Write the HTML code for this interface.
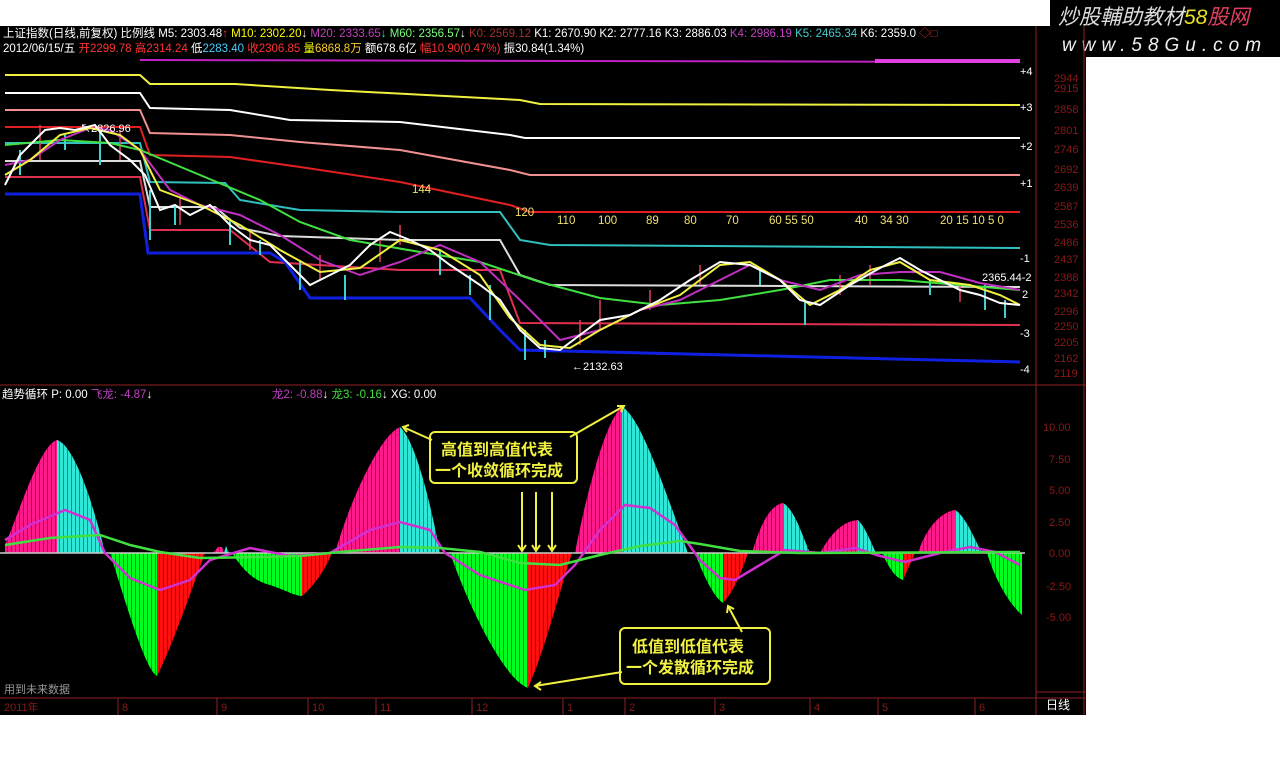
<!DOCTYPE html>
<html><head><meta charset="utf-8"><style>
html,body{margin:0;padding:0;background:#fff;width:1280px;height:771px;overflow:hidden}
svg{display:block}
text{font-family:"Liberation Sans","Noto Sans CJK SC",sans-serif}
</style></head><body>
<svg width="1280" height="771" viewBox="0 0 1280 771" xmlns="http://www.w3.org/2000/svg">
<defs>
<pattern id="st" width="4" height="10" patternUnits="userSpaceOnUse"><rect x="3" y="0" width="1" height="10" fill="#000"/></pattern>
</defs>
<rect x="0" y="0" width="1280" height="771" fill="#fff"/>
<rect x="0" y="26" width="1086" height="689" fill="#000"/>
<!-- logo -->
<rect x="1050" y="0" width="230" height="57" fill="#000"/>
<text x="1058" y="24" font-size="21" font-style="italic" fill="#ddd" font-family="'Noto Sans CJK SC',sans-serif">炒股輔助教材<tspan fill="#e8e020">58</tspan><tspan fill="#e04060">股网</tspan></text>
<text x="1062" y="51" font-size="19" font-style="italic" fill="#eee" letter-spacing="6" font-family="'Liberation Mono',monospace">www.58Gu.com</text>
<!-- frame lines -->
<line x1="1036" y1="26" x2="1036" y2="715" stroke="#902020" stroke-width="1"/>
<line x1="1084" y1="26" x2="1084" y2="715" stroke="#902020" stroke-width="1"/>
<line x1="0" y1="385" x2="1086" y2="385" stroke="#902020"/>
<line x1="0" y1="698" x2="1086" y2="698" stroke="#902020"/>
<line x1="1036" y1="692" x2="1086" y2="692" stroke="#902020"/>
<!-- header -->
<g font-size="11.5">
<text x="3" y="37"><tspan fill="#fff">上证指数(日线,前复权) 比例线  M5: 2303.48</tspan><tspan fill="#f33">↑</tspan><tspan fill="#ff0">  M10: 2302.20</tspan><tspan fill="#fff">↓</tspan><tspan fill="#c040c0">  M20: 2333.65</tspan><tspan fill="#0f8">↓</tspan><tspan fill="#7f7">  M60: 2356.57</tspan><tspan fill="#fff">↓</tspan><tspan fill="#a03030">  K0: 2569.12</tspan><tspan fill="#fff"> K1: 2670.90  K2: 2777.16  K3: 2886.03 </tspan><tspan fill="#c040c0"> K4: 2986.19 </tspan><tspan fill="#4cc"> K5: 2465.34 </tspan><tspan fill="#fff"> K6: 2359.0</tspan><tspan fill="#c03030">  ◇□</tspan></text>
<text x="3" y="52"><tspan fill="#fff">2012/06/15/五 </tspan><tspan fill="#f33">开2299.78 高2314.24 </tspan><tspan fill="#fff">低</tspan><tspan fill="#4cf">2283.40 </tspan><tspan fill="#f33">收2306.85 </tspan><tspan fill="#ff0">量</tspan><tspan fill="#fc3">6868.8万 </tspan><tspan fill="#fff">额678.6亿 </tspan><tspan fill="#f33">幅10.90(0.47%) </tspan><tspan fill="#fff">振30.84(1.34%)</tspan></text>
</g>
<!-- level lines -->
<g fill="none" stroke-width="2">
<polyline stroke="#c020c0" points="140,60 1020,62"/>
<rect x="875" y="59" width="145" height="4" fill="#e040e0" stroke="none"/>
<polyline stroke="#f0f040" points="5,75 140,75 150,84 235,84 330,90 520,100 540,104 1020,105"/>
<polyline stroke="#fff" points="5,93 140,93 150,108 230,110 290,120 400,122 510,135 525,138 1020,138"/>
<polyline stroke="#f09090" points="5,110 140,110 150,133 230,135 300,142 400,150 510,170 530,175 1020,175"/>
<polyline stroke="#e02020" points="5,127 140,127 150,155 230,157 300,167 400,182 510,205 530,212 1020,212"/>
<polyline stroke="#30c0c0" points="5,143 115,143 140,143 150,182 225,183 240,200 300,210 400,212 500,212 520,240 550,245 1020,248"/>
<polyline stroke="#ddd" points="5,161 140,161 150,207 215,207 240,228 280,236 400,240 500,240 520,275 550,285 1020,287"/>
<polyline stroke="#e03050" points="5,177 140,177 150,230 230,230 270,262 400,270 500,270 520,323 1020,325"/>
<polyline stroke="#1020e0" stroke-width="3" points="5,194 140,194 148,253 270,253 285,262 310,298 470,298 500,330 520,350 1020,362"/>
</g>
<!-- candle noise -->
<g stroke="#40d0d0" stroke-width="2">
<line x1="20" y1="150" x2="20" y2="175"/><line x1="65" y1="135" x2="65" y2="150"/><line x1="100" y1="130" x2="100" y2="165"/><line x1="150" y1="190" x2="150" y2="240"/><line x1="175" y1="205" x2="175" y2="225"/><line x1="230" y1="220" x2="230" y2="245"/><line x1="260" y1="240" x2="260" y2="255"/><line x1="300" y1="260" x2="300" y2="290"/><line x1="345" y1="275" x2="345" y2="300"/><line x1="440" y1="250" x2="440" y2="275"/><line x1="470" y1="275" x2="470" y2="295"/><line x1="490" y1="285" x2="490" y2="320"/><line x1="525" y1="330" x2="525" y2="360"/><line x1="545" y1="340" x2="545" y2="358"/><line x1="760" y1="270" x2="760" y2="285"/><line x1="805" y1="300" x2="805" y2="325"/><line x1="930" y1="280" x2="930" y2="295"/><line x1="985" y1="285" x2="985" y2="310"/><line x1="1005" y1="300" x2="1005" y2="318"/>
</g>
<g stroke="#e04060" stroke-width="1.5">
<line x1="40" y1="125" x2="40" y2="160"/><line x1="120" y1="130" x2="120" y2="160"/><line x1="180" y1="195" x2="180" y2="225"/><line x1="250" y1="230" x2="250" y2="250"/><line x1="320" y1="255" x2="320" y2="280"/><line x1="380" y1="240" x2="380" y2="262"/><line x1="400" y1="225" x2="400" y2="245"/><line x1="580" y1="320" x2="580" y2="345"/><line x1="600" y1="300" x2="600" y2="330"/><line x1="650" y1="290" x2="650" y2="310"/><line x1="700" y1="265" x2="700" y2="285"/><line x1="840" y1="275" x2="840" y2="295"/><line x1="870" y1="265" x2="870" y2="285"/><line x1="960" y1="285" x2="960" y2="302"/>
</g>
<!-- price curves -->
<g fill="none" stroke-width="2">
<polyline stroke="#40e040" points="5,145 60,140 110,143 140,150 200,175 260,200 300,222 350,240 420,252 480,262 540,282 600,298 660,305 720,300 780,290 830,280 900,280 960,285 1020,290"/>
<polyline stroke="#c030c0" points="5,165 30,160 60,140 90,128 110,130 140,150 170,190 200,205 240,215 280,235 320,260 360,275 400,262 440,245 480,262 520,300 560,340 600,330 640,310 680,300 720,280 750,265 780,280 820,290 860,275 900,272 940,272 980,283 1020,290"/>
<polyline stroke="#f0f040" points="5,175 30,160 60,135 90,128 120,135 140,150 160,190 200,205 240,225 280,250 320,272 360,268 400,240 440,250 480,275 510,318 540,345 570,348 600,330 640,310 680,295 720,265 750,262 780,280 810,305 840,290 870,270 900,262 930,280 970,285 1000,295 1020,305"/>
<polyline stroke="#fff" points="5,185 20,155 45,130 60,128 75,130 95,125 110,145 130,160 145,175 160,210 175,205 190,215 210,205 230,225 250,240 270,245 290,265 310,285 330,275 350,265 370,245 390,232 410,240 430,250 450,265 480,285 500,300 520,330 540,348 560,350 580,335 600,320 630,315 660,300 690,280 720,262 750,265 780,280 800,300 820,305 850,285 880,268 900,258 920,270 940,280 960,290 980,295 1000,303 1020,305"/>
</g>
<!-- labels in price panel -->
<g font-size="11" fill="#fff">
<text x="80" y="132">↖2826.96</text>
<text x="572" y="370">←2132.63</text>
<text x="982" y="281">2365.44-2</text>
</g>
<g font-size="11.5" fill="#f0e070">
<text x="412" y="193">144</text><text x="515" y="216">120</text>
<text x="557" y="224">110</text><text x="598" y="224">100</text><text x="646" y="224">89</text><text x="684" y="224">80</text><text x="726" y="224">70</text>
<text x="769" y="224">60  55  50</text><text x="855" y="224">40</text><text x="880" y="224">34 30</text><text x="940" y="224">20  15  10  5   0</text>
</g>
<g font-size="11" fill="#fff">
<text x="1020" y="75">+4</text><text x="1020" y="111">+3</text><text x="1020" y="150">+2</text><text x="1020" y="187">+1</text>
<text x="1020" y="262">-1</text><text x="1022" y="298">2</text><text x="1020" y="337">-3</text><text x="1020" y="373">-4</text>
</g>
<g font-size="11" fill="#8a1818">
<text x="1054" y="82">2944</text><text x="1054" y="92">2915</text><text x="1054" y="113">2858</text><text x="1054" y="134">2801</text><text x="1054" y="153">2746</text><text x="1054" y="173">2692</text><text x="1054" y="191">2639</text><text x="1054" y="210">2587</text><text x="1054" y="228">2536</text><text x="1054" y="246">2486</text><text x="1054" y="263">2437</text><text x="1054" y="281">2388</text><text x="1054" y="297">2342</text><text x="1054" y="315">2296</text><text x="1054" y="330">2250</text><text x="1054" y="346">2205</text><text x="1054" y="362">2162</text><text x="1054" y="377">2119</text>
</g>
<!-- indicator panel header -->
<text x="2" y="398" font-size="11.5"><tspan fill="#fff">趋势循环  P: 0.00  </tspan><tspan fill="#c040c0">飞龙: -4.87</tspan><tspan fill="#fff">↓</tspan></text>
<text x="272" y="398" font-size="11.5"><tspan fill="#c040c0">龙2: -0.88</tspan><tspan fill="#fff">↓ </tspan><tspan fill="#40e040"> 龙3: -0.16</tspan><tspan fill="#fff">↓   XG: 0.00</tspan></text>
<!-- histogram -->
<g stroke="none">
<path fill="#ff1a8c" d="M5,553 L5,545 C20,510 40,445 57,440 L57,553Z"/>
<path fill="#30e8d8" d="M57,553 L57,440 C75,445 95,510 105,553Z"/>
<path fill="#00ff20" d="M110,553 C125,600 145,670 157,676 L157,553Z"/>
<path fill="#ff1010" d="M157,553 L157,676 C175,640 195,580 205,553Z"/>
<path fill="#ff1a8c" d="M213,553 L218,547 L222,547 L224,553Z"/>
<path fill="#30e8d8" d="M224,553 L226,546 L229,553Z"/>
<path fill="#00ff20" d="M232,553 C240,565 250,580 270,585 C285,590 295,596 302,596 L302,553Z"/>
<path fill="#ff1010" d="M302,553 L302,596 C315,585 325,570 332,553Z"/>
<path fill="#ff1a8c" d="M335,553 C350,500 380,435 400,427 L400,553Z"/>
<path fill="#30e8d8" d="M400,553 L400,427 C415,440 430,500 440,553Z"/>
<path fill="#00ff20" d="M450,553 C470,610 505,680 528,688 L528,553Z"/>
<path fill="#ff1010" d="M528,553 L528,688 C545,650 560,590 572,553Z"/>
<path fill="#ff1a8c" d="M575,553 C585,500 605,420 622,407 L622,553Z"/>
<path fill="#30e8d8" d="M622,553 L622,407 C640,415 665,490 688,553Z"/>
<path fill="#00ff20" d="M695,553 C705,580 715,598 723,603 L723,553Z"/>
<path fill="#ff1010" d="M723,553 L723,603 C735,590 742,570 748,553Z"/>
<path fill="#ff1a8c" d="M752,553 C760,525 770,505 783,503 L783,553Z"/>
<path fill="#30e8d8" d="M783,553 L783,503 C795,510 802,535 810,553Z"/>
<path fill="#ff1a8c" d="M820,553 C830,535 842,521 858,520 L858,553Z"/>
<path fill="#30e8d8" d="M858,553 L858,520 C866,528 872,545 876,553Z"/>
<path fill="#00ff20" d="M882,553 C890,570 896,578 903,580 L903,553Z"/>
<path fill="#ff1010" d="M903,553 L903,580 L915,553Z"/>
<path fill="#ff1a8c" d="M918,553 C925,530 940,512 955,510 L955,553Z"/>
<path fill="#30e8d8" d="M955,553 L955,510 C965,515 975,540 982,553Z"/>
<path fill="#00ff20" d="M987,553 C995,580 1010,605 1022,615 L1022,553Z"/>
</g>
<rect x="0" y="400" width="1030" height="292" fill="url(#st)" opacity="0.4"/>
<line x1="0" y1="553" x2="1025" y2="553" stroke="#ccc" stroke-width="1.5"/>
<g fill="none" stroke-width="2.5">
<polyline stroke="#d030d0" points="5,540 30,525 65,510 90,520 105,553 130,578 160,590 190,580 210,560 250,548 290,556 330,553 370,530 400,522 430,530 445,553 480,575 525,590 555,585 575,565 600,530 625,505 650,508 675,525 700,560 720,578 735,580 760,565 785,550 820,553 855,548 880,556 905,562 940,553 970,547 995,552 1020,565"/>
<polyline stroke="#40e040" points="5,545 50,538 100,535 130,545 160,552 200,558 260,557 300,556 340,552 400,547 440,548 480,552 520,563 560,565 600,555 640,546 680,541 700,544 740,551 800,553 1020,552"/>
</g>
<!-- annotations -->
<g fill="none" stroke="#f0f040" stroke-width="2">
<rect x="430" y="432" width="147" height="51" rx="5"/>
<rect x="620" y="628" width="150" height="56" rx="5"/>
<line x1="432" y1="440" x2="403" y2="427"/><polyline points="409,425 403,427 407,432"/>
<line x1="570" y1="437" x2="624" y2="406"/><polyline points="617,406 624,406 621,412"/>
<line x1="622" y1="672" x2="535" y2="686"/><polyline points="541,682 535,686 541,690"/>
<line x1="742" y1="632" x2="728" y2="606"/><polyline points="727,613 728,606 734,609"/>
<line x1="522" y1="492" x2="522" y2="551"/><line x1="536" y1="492" x2="536" y2="551"/><line x1="552" y1="492" x2="552" y2="551"/>
<polyline points="518,545 522,551 526,545"/><polyline points="532,545 536,551 540,545"/><polyline points="548,545 552,551 556,545"/>
</g>
<g font-size="16" font-weight="bold" fill="#f0f040" font-family="'Noto Sans CJK SC',sans-serif">
<text x="441" y="455">高值到高值代表</text><text x="435" y="476">一个收敛循环完成</text>
<text x="632" y="652">低值到低值代表</text><text x="626" y="673">一个发散循环完成</text>
</g>
<g font-size="11" fill="#8a1818">
<text x="1043" y="431">10.00</text><text x="1049" y="463">7.50</text><text x="1049" y="494">5.00</text><text x="1049" y="526">2.50</text><text x="1049" y="557">0.00</text><text x="1046" y="590">-2.50</text><text x="1046" y="621">-5.00</text>
</g>
<text x="4" y="693" font-size="11" fill="#999">用到未来数据</text>
<!-- date axis -->
<g font-size="11" fill="#8a1818">
<text x="4" y="711">2011年</text><text x="122" y="711">8</text><text x="221" y="711">9</text><text x="312" y="711">10</text><text x="380" y="711">11</text><text x="476" y="711">12</text><text x="567" y="711">1</text><text x="629" y="711">2</text><text x="719" y="711">3</text><text x="814" y="711">4</text><text x="882" y="711">5</text><text x="979" y="711">6</text>
</g>
<g stroke="#902020"><line x1="118" y1="698" x2="118" y2="715"/><line x1="217" y1="698" x2="217" y2="715"/><line x1="308" y1="698" x2="308" y2="715"/><line x1="376" y1="698" x2="376" y2="715"/><line x1="472" y1="698" x2="472" y2="715"/><line x1="563" y1="698" x2="563" y2="715"/><line x1="625" y1="698" x2="625" y2="715"/><line x1="715" y1="698" x2="715" y2="715"/><line x1="810" y1="698" x2="810" y2="715"/><line x1="878" y1="698" x2="878" y2="715"/><line x1="975" y1="698" x2="975" y2="715"/></g>
<text x="1046" y="709" font-size="12" fill="#fff">日线</text>
</svg>
</body></html>
